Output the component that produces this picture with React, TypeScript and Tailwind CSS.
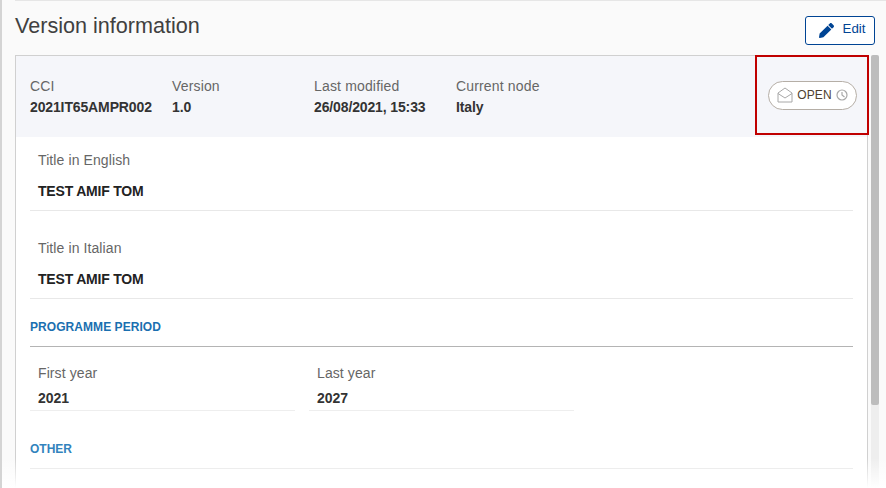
import React from 'react';

const font = { fontFamily: '"Liberation Sans", Arial, sans-serif' };

const MetaItem = ({ label, value, width }: { label: string; value: string; width: string }) => (
  <div className={`${width} shrink-0`}>
    <div className="text-sm leading-[20px] tracking-[0.16px] text-[#666666]">{label}</div>
    <div className="mt-[1px] text-sm font-bold leading-[20px] tracking-[-0.13px] text-[#333333]">{value}</div>
  </div>
);

const TitleRow = ({ label, value, className = '' }: { label: string; value: string; className?: string }) => (
  <div className={`h-[74px] border-b border-[#e8e8e8] pl-2 ${className}`}>
    <div className="pt-[13px] text-sm leading-[20px] tracking-[0.1px] text-[#666666]">{label}</div>
    <div className="mt-[11px] text-sm font-bold leading-[20px] tracking-[-0.2px] text-[#222222]">{value}</div>
  </div>
);

const YearField = ({ label, value, width }: { label: string; value: string; width: string }) => (
  <div className={`${width} h-[64px] border-b border-[#eeeeee] pl-2`}>
    <div className="pt-[16px] text-sm leading-[20px] tracking-[0.1px] text-[#666666]">{label}</div>
    <div className="mt-[5px] text-sm font-bold leading-[20px] text-[#333333]">{value}</div>
  </div>
);

const App: React.FC = () => {
  return (
    <div style={font} className="relative h-[488px] w-[886px] overflow-hidden border-l-2 border-[#d4d4d4] bg-[#fafafa]">
      <div className="ml-[13px] h-[1px] bg-[#e6e6e6]" />

      <div className="flex h-[54px] items-start justify-between pl-[13px] pr-[11px]">
        <h1 className="pt-[11px] text-[21.6px] font-normal leading-[28px] text-[#404040]">Version information</h1>
        <button className="mt-[15px] flex h-[29px] w-[70px] items-center justify-center gap-[9px] rounded-[3px] border border-[#004494] bg-white pb-[3px] pl-[4px] text-[13.3px] text-[#004494]">
          <svg className="mt-[3px]" width="15" height="15" viewBox="0 0 512 512" fill="#004494">
            <path d="M497.9 142.1l-46.1 46.1c-4.700 4.700-12.300 4.700-17 0l-111-111c-4.700-4.700-4.700-12.300 0-17l46.100-46.100c18.700-18.700 49.100-18.700 67.900 0l60.100 60.100c18.800 18.700 18.800 49.100 0 67.900zM284.200 99.800L21.600 362.400.4 483.900c-2.900 16.400 11.400 30.600 27.800 27.800l121.500-21.300 262.600-262.600c4.700-4.700 4.700-12.300 0-17l-111-111c-4.800-4.700-12.400-4.700-17.100 0z" />
          </svg>
          Edit
        </button>
      </div>

      <div className="flex pl-[13px]">
        <div className="h-[440px] w-[853px] shrink-0 border-l border-r border-t border-[#d0d0d0] bg-white">
          <div className="flex h-[81px] items-center justify-between bg-[#f5f6fa] pl-[14px] pr-[10px]">
            <div className="flex">
              <MetaItem label="CCI" value="2021IT65AMPR002" width="w-[142px]" />
              <MetaItem label="Version" value="1.0" width="w-[142px]" />
              <MetaItem label="Last modified" value="26/08/2021, 15:33" width="w-[142px]" />
              <MetaItem label="Current node" value="Italy" width="w-[142px]" />
            </div>
            <div className="mb-[3px] flex h-[29px] w-[89px] items-center justify-center gap-[4px] rounded-full border border-[#b5aea6] bg-white text-xs tracking-[0.15px] text-[#4f3f30]">
              <svg width="16" height="16" viewBox="0 0 16 16" fill="none" stroke="#a8a8a8" strokeWidth="1">
                <path d="M1 6 L8 1 L15 6 V15 H1 Z" />
                <path d="M1 6.500 L8 11 L15 6.500" />
              </svg>
              <span>OPEN</span>
              <svg width="12" height="12" viewBox="0 0 12 12" fill="none" stroke="#a8a8a8" strokeWidth="1.200">
                <circle cx="6" cy="6" r="5" />
                <path d="M6 3 V6 L8.500 8" />
              </svg>
            </div>
          </div>

          <div className="px-[14px]">
            <TitleRow label="Title in English" value="TEST AMIF TOM" />
            <TitleRow className="mt-[14px]" label="Title in Italian" value="TEST AMIF TOM" />

            <div className="flex h-[48px] items-end border-b border-[#b4b4b4] pb-[11px] text-xs font-bold leading-[16px] tracking-[0.06px] text-[#1a6fb0]">
              PROGRAMME PERIOD
            </div>
            <div className="flex gap-[14px]">
              <YearField label="First year" value="2021" width="w-[265px]" />
              <YearField label="Last year" value="2027" width="w-[265px]" />
            </div>

            <div className="flex h-[58px] items-end border-b border-[#e4e4e4] pb-[11px] text-xs font-bold leading-[16px] text-[#3283bd]">
              OTHER
            </div>
          </div>
        </div>

        <div className="ml-[3px] h-[440px] w-[8px] rounded-[2px] bg-[#eeeeee]">
          <div className="h-[350px] rounded-[2px] bg-[#bdbdbd]" />
        </div>
      </div>

      <div className="pointer-events-none absolute left-[753px] top-[55px] h-[80px] w-[114px] border-2 border-[#c00000]" />
      <div className="pointer-events-none absolute bottom-0 left-0 right-0 h-[30px] bg-gradient-to-b from-transparent to-white" />
    </div>
  );
};

export default App;
